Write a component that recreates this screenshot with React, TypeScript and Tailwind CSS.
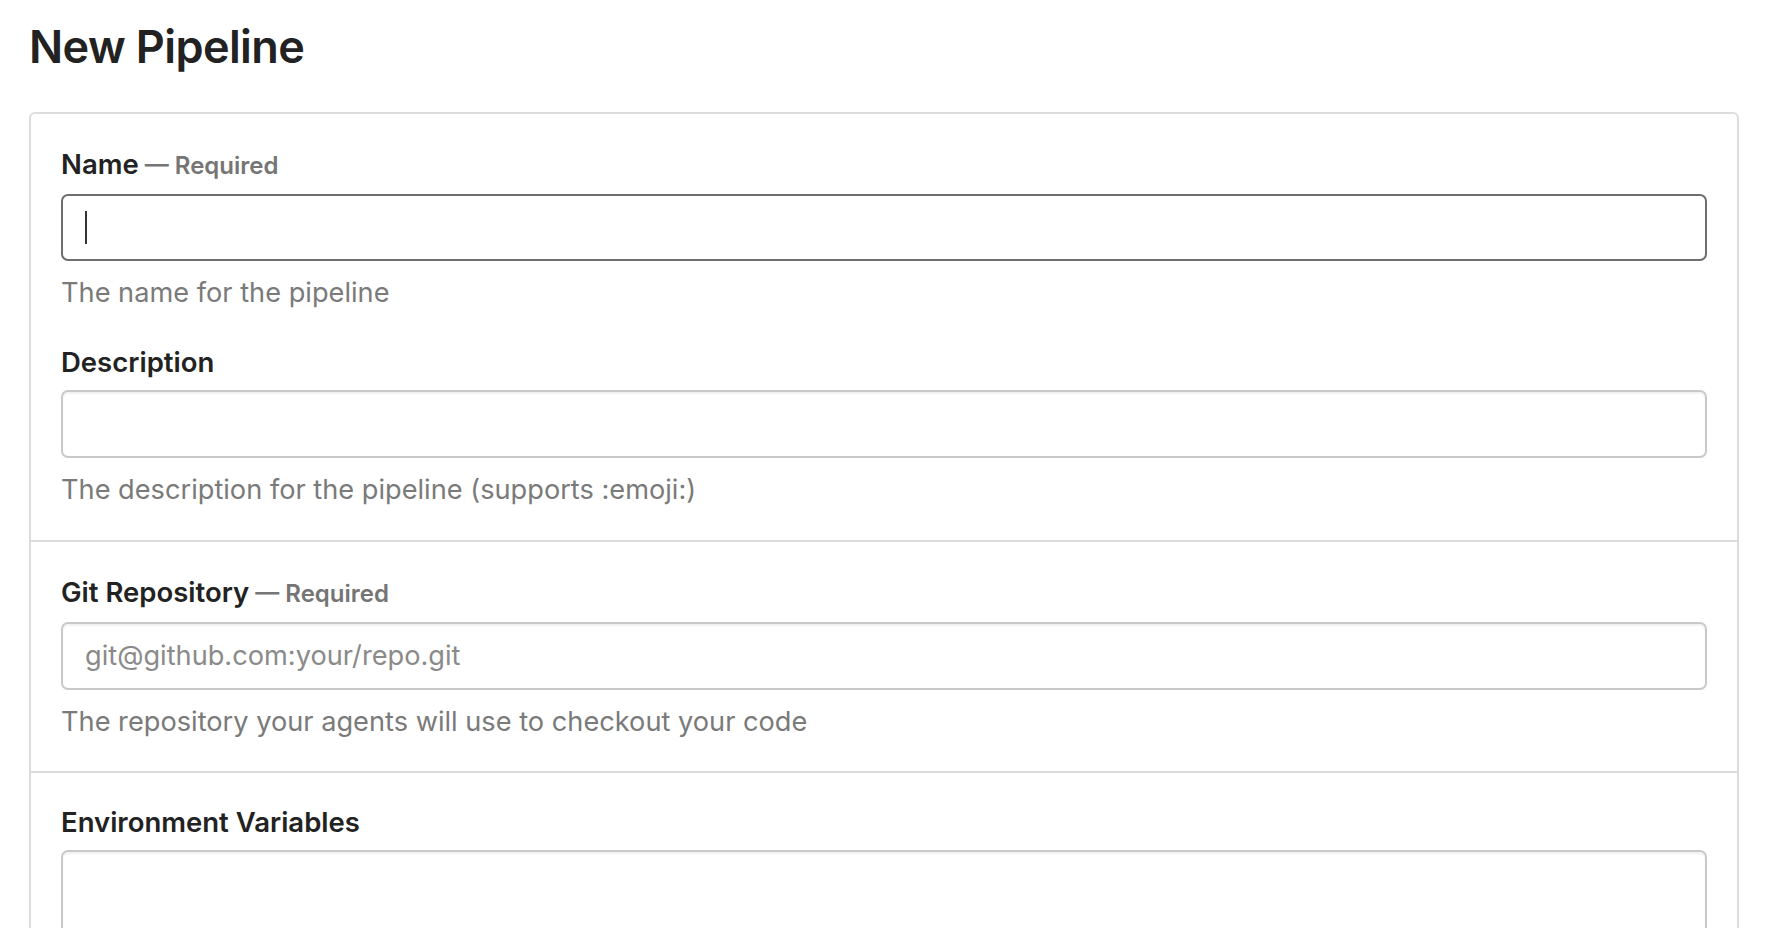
import React from 'react';

const font = { fontFamily: 'Inter, "Noto Sans", sans-serif' };

interface FieldProps {
  label: string;
  required?: boolean;
  placeholder?: string;
  hint?: string;
  focused?: boolean;
  tall?: boolean;
}

const Field: React.FC<FieldProps> = ({ label, required, placeholder, hint, focused, tall }) => {
  return (
    <div>
      <label className="block text-[27.5px] leading-[36px] font-semibold text-[#222]">
        {label}
        {required && (
          <span className="text-[24px] font-semibold text-[#757575]"> — Required</span>
        )}
      </label>
      <div
        className={
          focused
            ? 'mt-[10px] h-[67px] rounded-[7px] border-2 border-[#6e6e6e] bg-white flex items-center pl-[22px]'
            : tall
            ? 'mt-[10px] h-[160px] rounded-[7px] border-2 border-[#c9c9c9] bg-white shadow-[inset_0_2px_2px_rgba(0,0,0,0.06)]'
            : 'mt-[10px] h-[68px] rounded-[7px] border-2 border-[#c9c9c9] bg-white shadow-[inset_0_2px_2px_rgba(0,0,0,0.06)] flex items-center pl-[22px]'
        }
      >
        {focused && <div className="w-[2px] h-[33px] bg-[#333]" />}
        {placeholder && <span className="text-[27.2px] text-[#8a8a8a]">{placeholder}</span>}
      </div>
      {hint && <p className="mt-[14px] text-[27.2px] leading-[36px] text-[#7a7a7a]">{hint}</p>}
    </div>
  );
};

export default function App() {
  return (
    <div className="bg-white px-[29px] pt-[14px] overflow-hidden h-[928px]" style={font}>
      <h1 className="text-[45px] leading-[66px] font-semibold text-[#222] tracking-[-0.6px]">New Pipeline</h1>
      <div className="mt-[32px] w-[1710px] rounded-[6px] border-2 border-[#dcdcdc] bg-white">
        {/* Name / Description */}
        <div className="px-[30px] pt-[32px] pb-[32px] flex flex-col gap-[33px]">
          <Field label="Name" required focused hint="The name for the pipeline" />
          <Field label="Description" hint="The description for the pipeline (supports :emoji:)" />
        </div>
        {/* Repository */}
        <div className="border-t-2 border-[#dcdcdc] px-[30px] pt-[32px] pb-[31px]">
          <Field
            label="Git Repository"
            required
            placeholder="git@github.com:your/repo.git"
            hint="The repository your agents will use to checkout your code"
          />
        </div>
        {/* Environment */}
        <div className="border-t-2 border-[#dcdcdc] px-[30px] pt-[31px] pb-[32px]">
          <Field label="Environment Variables" tall />
        </div>
      </div>
    </div>
  );
}
